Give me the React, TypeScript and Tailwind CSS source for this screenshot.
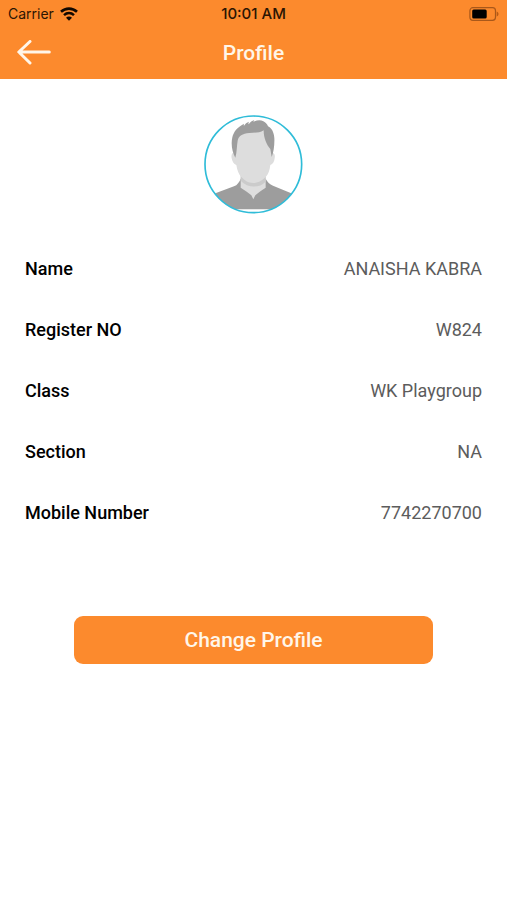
type ProfileField = {
  label: string;
  value: string;
};

const profileFields: ProfileField[] = [
  { label: "Name", value: "ANAISHA KABRA" },
  { label: "Register NO", value: "W824" },
  { label: "Class", value: "WK Playgroup" },
  { label: "Section", value: "NA" },
  { label: "Mobile Number", value: "7742270700" }
];

export default function App() {
  return (
    <div className="min-h-screen bg-white font-['Roboto',sans-serif]">
      <header className="bg-[#fc8a2d]">
        <StatusBar />
        <div className="grid h-[52px] grid-cols-[1fr_auto_1fr] items-center px-4">
          <button aria-label="Back" className="justify-self-start" type="button">
            <BackArrow />
          </button>
          <h1 className="text-[21px] leading-6 font-medium text-[#fff6e9]">Profile</h1>
        </div>
      </header>

      <main className="pt-9">
        <Avatar />
        <dl className="mt-6 px-[25px]">
          {profileFields.map((field) => (
            <div className="flex h-[61px] items-center justify-between gap-4" key={field.label}>
              <dt className="text-[18px] leading-6 font-medium text-black">{field.label}</dt>
              <dd className="text-right text-[18px] leading-6 text-[#5c5c5c]">{field.value}</dd>
            </div>
          ))}
        </dl>
        <div className="mt-[73px] px-[74px]">
          <button
            className="h-12 w-full rounded-[9px] bg-[#fc8a2d] text-[21px] leading-6 font-medium text-[#fff6e9]"
            type="button"
          >
            Change Profile
          </button>
        </div>
      </main>
    </div>
  );
}

function StatusBar() {
  return (
    <div className="grid h-[27px] grid-cols-[1fr_auto_1fr] items-center px-2 font-['Inter',sans-serif] text-[#2b1503]">
      <div className="flex items-center gap-[6px]">
        <span className="text-[14px] leading-5">Carrier</span>
        <WifiIcon />
      </div>
      <span className="text-[15px] leading-5 font-medium">10:01 AM</span>
      <BatteryIcon />
    </div>
  );
}

function WifiIcon() {
  return (
    <svg aria-hidden="true" className="h-[14px] w-[18px]" fill="none" viewBox="0 0 18 14">
      <path d="M1 4.8C5.6.5 12.4.5 17 4.8" stroke="#120800" strokeWidth="2.6" />
      <path d="M4 8.1c3-2.7 7-2.7 10 0" stroke="#120800" strokeWidth="2.5" />
      <path d="M9 13.8 6 10.8c1.7-1.6 4.3-1.6 6 0Z" fill="#120800" />
    </svg>
  );
}

function BatteryIcon() {
  return (
    <svg aria-hidden="true" className="h-[14px] w-[30px] justify-self-end" viewBox="0 0 30 14">
      <rect
        fill="none"
        height="12.6"
        rx="3"
        stroke="#a9581a"
        strokeWidth="1.2"
        width="25.6"
        x=".9"
        y=".7"
      />
      <rect fill="#000" height="9" rx="1.5" width="14.5" x="3.2" y="2.5" />
      <path d="M27.7 4.6c2.4.7 2.4 4.1 0 4.8Z" fill="#b85a14" />
    </svg>
  );
}

function BackArrow() {
  return (
    <svg
      aria-hidden="true"
      className="h-[26px] w-[36px]"
      fill="none"
      stroke="#fff6e9"
      strokeLinecap="round"
      strokeLinejoin="round"
      strokeWidth="3"
      viewBox="0 0 36 26"
    >
      <path d="M33.3 12H3M14 1.5 2.8 12 14 23" />
    </svg>
  );
}

function Avatar() {
  return (
    <svg
      aria-label="Profile photo"
      className="mx-auto block h-[99px] w-[99px]"
      role="img"
      viewBox="29 30 297 297"
    >
      <defs>
        <clipPath id="avatar-clip">
          <circle cx="177" cy="178" r="145" />
        </clipPath>
      </defs>
      <g clipPath="url(#avatar-clip)">
        {/* shirt */}
        <path
          d="M139 221c-4 10-10 19-20 23l-54 20c-12 8-24 25-26 49h276c-3-24-13-40-26-49l-53-22c-10-4-17-11-22-21Z"
          fill="#9d9d9d"
        />
        {/* neck */}
        <path d="M139 190h75v58c-12 8-25 17-31 23l-6 12-6-12c-6-6-20-15-32-23Z" fill="#dedede" />
        <path d="M139 210h75v20c-18 20-54 20-75-3Z" fill="#cbcbcb" />
        {/* head */}
        <path
          d="M122 144c-9-3-12 6-10 16 2 10 6 18 14 20 3 17 7 28 15 36 9 9 20 18 36 18s28-9 37-18c8-8 12-20 14-36 8-2 12-11 13-20 2-11-1-18-9-16l2-60-38-18h-58l-18 26Z"
          fill="#dddddd"
        />
        {/* hair */}
        <path
          d="M123 158c-9-17-14-40-9-61 4-17 14-30 35-41-1 3-1 5 0 6 4-6 8-10 15-12-2 4-2 6-1 8 5-7 10-11 17-13l-3 5c12-5 22-6 30-1 7 4 12 9 14 15 11 5 18 18 19 35 1 20-2 43-8 57l-4-24c-11-12-20-32-20-56-12 9-27 6-43 8-21 2-32 8-35 23-3 17-2 34-7 51Z"
          fill="#9d9d9d"
        />
      </g>
      <circle cx="177" cy="178" fill="none" r="145" stroke="#2fbcd8" strokeWidth="5" />
    </svg>
  );
}
